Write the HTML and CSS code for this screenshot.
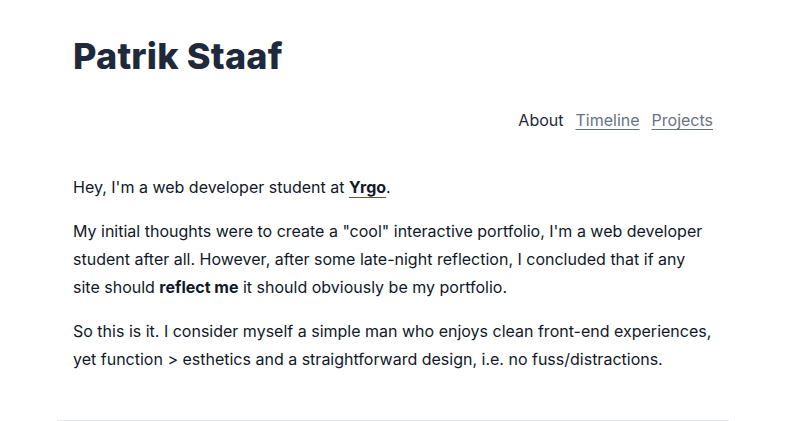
FILE: index.html
```html
<!DOCTYPE html>
<html lang="en">
<head>
<meta charset="utf-8">
<title>Patrik Staaf</title>
<link rel="stylesheet" href="styles.css">
</head>
<body>
<div class="wrap">
  <header class="header">
    <h1 class="title">Patrik Staaf</h1>
    <nav class="nav">
      <a class="nav-link active" href="#">About</a>
      <a class="nav-link" href="#">Timeline</a>
      <a class="nav-link" href="#">Projects</a>
    </nav>
  </header>
  <main class="content">
    <p>Hey, I'm a web developer student at <a class="strong-link" href="#">Yrgo</a>.</p>
    <p>My initial thoughts were to create a "cool" interactive portfolio, I'm a web developer student after all. However, after some late-night reflection, I concluded that if any site should <strong>reflect me</strong> it should obviously be my portfolio.</p>
    <p>So this is it. I consider myself a simple man who enjoys clean front-end experiences, yet function &gt; esthetics and a straightforward design, i.e. no fuss/distractions.</p>
  </main>
  <hr class="rule">
</div>
</body>
</html>
```

FILE: styles.css
```css
* { box-sizing: border-box; }
html, body { margin: 0; padding: 0; background: #fff; }
body {
  font-family: Inter, "Noto Sans", sans-serif;
  color: #111827;
  padding-right: 8px;
}
.wrap {
  width: 672px;
  margin: 0 auto;
}
.header {
  padding: 0 16px;
}
.title {
  margin: 0;
  padding-top: 36px;
  font-size: 36px;
  line-height: 40px;
  font-weight: 800;
  color: #1e293b;
  letter-spacing: 0.2px;
}
.nav {
  display: flex;
  justify-content: flex-end;
  gap: 12px;
  margin-top: 30px;
  font-size: 16px;
  line-height: 28px;
}
.nav-link {
  color: #6b7280;
  text-decoration: underline;
  text-underline-offset: 3px;
}
.nav-link.active {
  color: #1f2937;
  text-decoration: none;
}
.content {
  padding: 0 16px;
  margin-top: 39px;
  font-size: 16px;
  line-height: 28px;
}
.content p {
  margin: 0 0 16px;
}
.strong-link {
  color: #111827;
  font-weight: 700;
  text-decoration: underline;
  text-decoration-color: #2f55c4;
  text-decoration-thickness: 1px;
  text-underline-offset: 4px;
}
strong { font-weight: 700; }
.rule {
  border: 0;
  border-top: 1px solid #e5e7eb;
  margin: 47px 0 0;
}
```
